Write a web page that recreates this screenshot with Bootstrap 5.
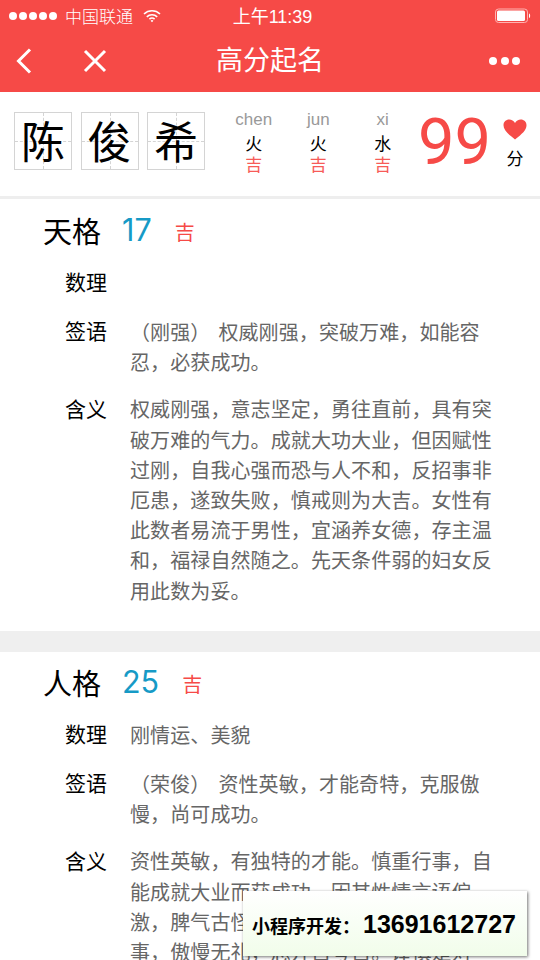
<!DOCTYPE html>
<html lang="zh">
<head>
<meta charset="utf-8">
<title>高分起名</title>
<link href="https://cdn.jsdelivr.net/npm/bootstrap@5.3.0/dist/css/bootstrap.min.css" rel="stylesheet">
<style>
html,body{height:960px;overflow:hidden;background:#fff;}
body{font-family:"Liberation Sans","Noto Sans CJK SC",sans-serif;color:#000;position:relative;}
.cjk{font-family:"Noto Sans CJK SC",sans-serif;}
.head-red{background:#f64a47;color:#fff;height:92px;}
.stat-bar{height:31px;padding:0 9px;font-size:16px;}
.dots{gap:2px;}
.dots i{display:block;width:8px;height:8px;border-radius:50%;background:#fff;}
.carrier{font-size:17px;margin-left:8px;font-weight:300;}
.wifi-mark{margin-left:10px;}
.clock{position:absolute;left:5px;right:0;top:4px;text-align:center;font-size:18px;line-height:22px;}
.title-row{height:60px;padding:0 20px 0 16px;position:relative;}
.title-text{position:absolute;left:0;right:0;top:10px;text-align:center;font-size:27px;line-height:36px;font-weight:400;}
.more{gap:3.500px;}
.more i{display:block;width:8px;height:8px;border-radius:50%;background:#fff;}
.name-panel{height:107px;padding:20px 0 0 14px;border-bottom:3px solid #eee;position:relative;z-index:1;}
.hanzi-cell{width:58px;height:58px;border:1px solid #d4d4d4;font-size:44px;line-height:54px;text-align:center;color:#000;position:relative;margin-right:8.500px;}
.hanzi-cell::before,.hanzi-cell::after{content:"";position:absolute;}
.hanzi-cell::before{left:0;right:0;top:28px;border-top:1px dashed #d4d4d4;}
.hanzi-cell::after{top:0;bottom:0;left:28px;border-left:1px dashed #d4d4d4;}
.hanzi-cell span{position:relative;z-index:1;}
.py-col{width:64.500px;text-align:center;}
.py-first{margin-left:8px;}
.py-latin{color:#999;line-height:20px;font-size:17px;font-family:"Liberation Sans",sans-serif;margin-top:-2px;}
.py-el{line-height:21px;font-size:17px;margin-top:2px;}
.py-luck{line-height:21px;font-size:17px;color:#f75b58;}
.score-num{font-family:Roboto,"Liberation Sans",sans-serif;font-weight:400;font-size:65px;line-height:60px;color:#f64a47;margin-left:3px;}
.score-side{width:28px;margin-left:10px;font-size:17px;}
.score-side svg{display:block;margin-top:7px;margin-left:2px;}
.score-side div{line-height:22px;text-align:center;margin-top:7px;}
.ge-head{padding-left:43px;height:56px;}
.ge-name{font-size:29px;line-height:40px;}
.ge-num{font-family:Inter,"Liberation Sans",sans-serif;font-weight:400;font-size:30.500px;line-height:40px;color:#169ac6;margin-left:21px;}
.ge-luck{font-size:20px;color:#f64a47;margin-left:23px;line-height:30px;margin-top:7px;}
.ge-row{display:flex;padding-left:65px;margin-bottom:16px;min-height:33px;}
.ge-label{width:65px;flex:none;font-size:21px;line-height:30px;}
.ge-text{font-size:20px;line-height:30.200px;color:#666;flex:1;letter-spacing:.1px;margin-top:1.500px;}
.paren-gap{display:inline-block;width:8px;}
.gap-band{height:21px;background:#efefef;}
.sec-one{height:432px;padding:11px 46px 0 0;}
.sec-two{padding:10px 46px 0 0;}
.promo{position:absolute;left:243px;top:891px;width:284px;height:65px;background:linear-gradient(#fff,#f1fdea);box-shadow:1px 1px 3px rgba(0,0,0,.55);font-weight:700;display:flex;align-items:center;padding:3px 0 0 9px;color:#000;z-index:5;}
.promo-a{font-size:18px;}
.promo-b{font-size:25px;font-family:"Liberation Sans",sans-serif;margin-left:3px;white-space:nowrap;}
</style>
</head>
<body>
<header class="head-red position-relative">
  <div class="stat-bar d-flex align-items-center">
    <div class="dots d-flex"><i></i><i></i><i></i><i></i><i></i></div>
    <span class="carrier cjk">中国联通</span>
    <svg class="wifi-mark" width="18" height="14" viewBox="0 0 18 14"><path d="M1 5a11.500 11.500 0 0 1 16 0M3.800 7.800a7.500 7.500 0 0 1 10.400 0M6.400 10.200a3.800 3.800 0 0 1 5.200 0" fill="none" stroke="#fff" stroke-width="1.600"/><path d="M7.600 11.700L9 13.200l1.400-1.500a2 2 0 0 0-2.800 0z" fill="#fff"/></svg>
    <span class="clock"><span class="cjk">上午</span>11:39</span>
    <svg class="ms-auto" width="36" height="16" viewBox="0 0 36 16"><rect x=".5" y="1" width="32" height="13.500" rx="3" fill="none" stroke="#ffb3b1"/><rect x="2" y="2.500" width="28" height="10.500" rx="1.500" fill="#fff"/><path d="M34 5.500c1.500.3 1.500 4.200 0 4.500z" fill="#fff"/></svg>
  </div>
  <div class="title-row d-flex align-items-center">
    <svg width="16" height="26" viewBox="0 0 16 26"><path d="M14 1.500L2.500 13 14 24.500" fill="none" stroke="#fff" stroke-width="3"/></svg>
    <svg style="margin-left:51px" width="24" height="24" viewBox="0 0 24 24"><path d="M2 2l20 20M22 2L2 22" stroke="#fff" stroke-width="3"/></svg>
    <div class="title-text cjk">高分起名</div>
    <div class="more d-flex ms-auto"><i></i><i></i><i></i></div>
  </div>
</header>

<section class="name-panel d-flex cjk">
  <div class="hanzi-cell"><span>陈</span></div>
  <div class="hanzi-cell"><span>俊</span></div>
  <div class="hanzi-cell"><span>希</span></div>
  <div class="py-col py-first"><div class="py-latin">chen</div><div class="py-el">火</div><div class="py-luck">吉</div></div>
  <div class="py-col"><div class="py-latin">jun</div><div class="py-el">火</div><div class="py-luck">吉</div></div>
  <div class="py-col"><div class="py-latin">xi</div><div class="py-el">水</div><div class="py-luck">吉</div></div>
  <div class="score-num">99</div>
  <div class="score-side">
    <svg width="24" height="21" viewBox="0 0 24 21"><path d="M12 20.500C5 15 .5 11 .5 6.200.5 2.800 3 .5 6.200.5c2.400 0 4.600 1.300 5.800 3.400C13.200 1.800 15.400.5 17.800.5 21 .5 23.500 2.800 23.500 6.200 23.500 11 19 15 12 20.500z" fill="#f64a47"/></svg>
    <div>分</div>
  </div>
</section>

<main class="cjk">
  <section class="sec-one">
    <div class="ge-head d-flex align-items-start">
      <span class="ge-name">天格</span><span class="ge-num">17</span><span class="ge-luck">吉</span>
    </div>
    <div class="ge-row"><div class="ge-label">数理</div><div class="ge-text"></div></div>
    <div class="ge-row"><div class="ge-label">签语</div><div class="ge-text">（刚强）<span class="paren-gap"></span>权威刚强，突破万难，如能容忍，必获成功。</div></div>
    <div class="ge-row"><div class="ge-label">含义</div><div class="ge-text">权威刚强，意志坚定，勇往直前，具有突破万难的气力。成就大功大业，但因赋性过刚，自我心强而恐与人不和，反招事非厄患，遂致失败，慎戒则为大吉。女性有此数者易流于男性，宜涵养女德，存主温和，福禄自然随之。先天条件弱的妇女反用此数为妥。</div></div>
  </section>
  <div class="gap-band"></div>
  <section class="sec-two">
    <div class="ge-head d-flex align-items-start">
      <span class="ge-name">人格</span><span class="ge-num">25</span><span class="ge-luck">吉</span>
    </div>
    <div class="ge-row"><div class="ge-label">数理</div><div class="ge-text">刚情运、美貌</div></div>
    <div class="ge-row"><div class="ge-label">签语</div><div class="ge-text">（荣俊）<span class="paren-gap"></span>资性英敏，才能奇特，克服傲慢，尚可成功。</div></div>
    <div class="ge-row"><div class="ge-label">含义</div><div class="ge-text">资性英敏，有独特的才能。慎重行事，自能成就大业而获成功。因其性情言语偏激，脾气古怪，容易招惹是非，不善处事，傲慢无礼，总开自夸自。谨慎是对</div></div>
  </section>
</main>

<aside class="promo"><span class="promo-a cjk">小程序开发：</span><span class="promo-b">13691612727</span></aside>
<script src="https://cdn.jsdelivr.net/npm/bootstrap@5.3.0/dist/js/bootstrap.bundle.min.js"></script>
</body>
</html>
